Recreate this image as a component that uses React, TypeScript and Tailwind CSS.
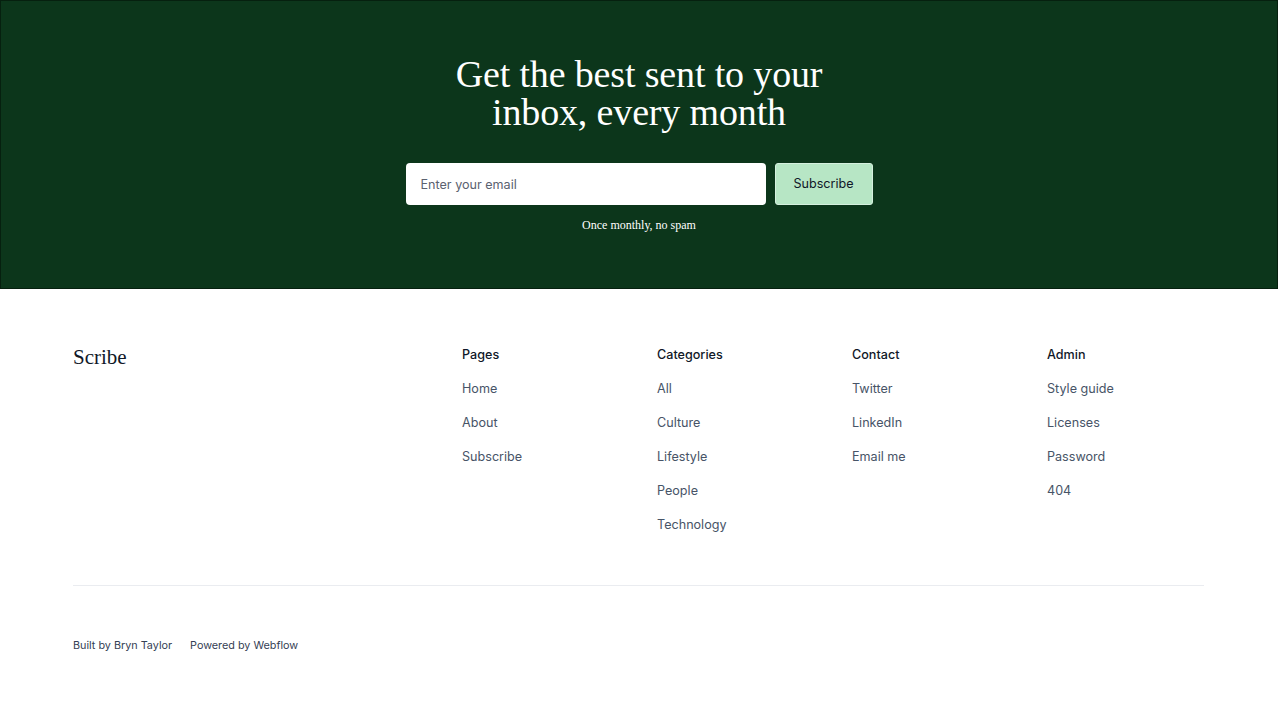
const footerColumns = [
  { title: "Pages", links: ["Home", "About", "Subscribe"] },
  { title: "Categories", links: ["All", "Culture", "Lifestyle", "People", "Technology"] },
  { title: "Contact", links: ["Twitter", "LinkedIn", "Email me"] },
  { title: "Admin", links: ["Style guide", "Licenses", "Password", "404"] },
];

function Newsletter() {
  return (
    <section className="h-[289px] bg-[#0c361b] border border-[#06200f] flex flex-col items-center pt-[54px]">
      <h2 className="text-center text-white text-[38px] leading-[38px] tracking-[-0.15px] font-['Liberation_Serif',serif]">
        Get the best sent to your
        <br />
        inbox, every month
      </h2>
      <form className="mt-[32px] flex gap-[9px]" onSubmit={(e) => e.preventDefault()}>
        <input
          type="email"
          placeholder="Enter your email"
          className="w-[360px] h-[42px] rounded-[4px] bg-white px-[15px] text-[12.6px] text-gray-900 placeholder:text-[#5b6270] font-['Inter',sans-serif] outline-none"
        />
        <button className="w-[98px] h-[42px] rounded-[3px] border border-[#d5f0de] bg-[#b7e6c5] text-[12.6px] text-[#101828] font-['Inter',sans-serif]">
          Subscribe
        </button>
      </form>
      <p className="mt-[11px] text-[12px] text-white font-['Liberation_Serif',serif]">Once monthly, no spam</p>
    </section>
  );
}

function Footer() {
  return (
    <footer className="px-[73px] pt-[56px] font-['Inter',sans-serif]">
      <div className="flex pb-[50px]">
        <div className="w-[389px] shrink-0 text-[21px] leading-none pt-[2px] text-[#101828] font-['Liberation_Serif',serif]">
          Scribe
        </div>
        {footerColumns.map((col) => (
          <div key={col.title} className="w-[195px] shrink-0 flex flex-col">
            <h4 className="text-[12.6px] font-medium text-[#101828] leading-5">{col.title}</h4>
            <ul className="mt-[14px] flex flex-col gap-[14px] text-[12.6px] leading-5">
              {col.links.map((link) => (
                <li key={link}>
                  <a href="#" className="text-[#475467]">
                    {link}
                  </a>
                </li>
              ))}
            </ul>
          </div>
        ))}
      </div>
      <div className="w-[1131px] border-t border-[#eaecf0]" />
      <div className="flex gap-[18px] pt-[52px] text-[10.8px] leading-4 text-[#344054]">
        <span>Built by Bryn Taylor</span>
        <span>Powered by Webflow</span>
      </div>
    </footer>
  );
}

export default function App() {
  return (
    <div className="min-h-[704px] bg-white w-[1278px] overflow-hidden">
      <Newsletter />
      <Footer />
    </div>
  );
}
